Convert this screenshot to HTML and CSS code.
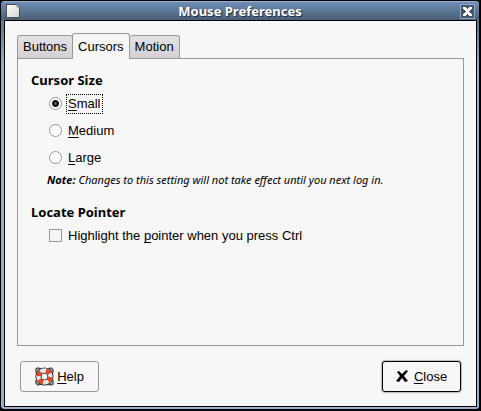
FILE: index.html
```
<!DOCTYPE html>
<html lang="en">
<head>
  <meta charset="utf-8">
  <title>Mouse Preferences</title>
  <link rel="stylesheet" href="styles.css">
</head>

<body>
  <div class="window">
    <header class="titlebar">
      <svg class="doc-icon" width="14" height="14" viewBox="0 0 14 14">
        <defs>
          <linearGradient id="paper" x1="0" y1="0" x2="1" y2="1">
            <stop offset="0" stop-color="#ffffff"/>
            <stop offset="1" stop-color="#d2d2d2"/>
          </linearGradient>
        </defs>
        <path d="M.5.5H10.500L13.500 3.500V13.500H.5Z" fill="url(#paper)" stroke="#4c4c4c"/>
        <path d="M10.500 1V3.500H13" fill="#fff" stroke="#bbb"/>
      </svg>
      <h1>Mouse Preferences</h1>
      <button class="window-close" type="button" aria-label="Close window">
        <svg width="9" height="9" viewBox="0 0 9 9" shape-rendering="crispEdges">
          <path d="M0 0H3V1H4V2H5V1H6V0H9V2H8V3H7V4H6V5H7V6H8V7H9V9H6V8H5V7H4V8H3V9H0V7H1V6H2V5H3V4H2V3H1V2H0Z" fill="#fff"/>
        </svg>
      </button>
    </header>

    <form class="content">
      <div class="tabs" role="tablist">
        <button class="tab" type="button" role="tab">Buttons</button>
        <button class="tab active" type="button" role="tab" aria-selected="true">Cursors</button>
        <button class="tab" type="button" role="tab">Motion</button>
      </div>

      <div class="panel" role="tabpanel">
        <h2>Cursor Size</h2>
        <div class="option">
          <input type="radio" id="small" name="size" checked>
          <label class="focused" for="small"><u>S</u>mall</label>
        </div>
        <div class="option">
          <input type="radio" id="medium" name="size">
          <label for="medium"><u>M</u>edium</label>
        </div>
        <div class="option">
          <input type="radio" id="large" name="size">
          <label for="large"><u>L</u>arge</label>
        </div>
        <p class="note"><b>Note:</b> Changes to this setting will not take effect until you next log in.</p>

        <h2>Locate Pointer</h2>
        <div class="option">
          <input type="checkbox" id="highlight">
          <label for="highlight">Highlight the <u>p</u>ointer when you press Ctrl</label>
        </div>
      </div>

      <footer class="actions">
        <button class="button" type="button">
          <svg width="19" height="19" viewBox="0 0 20 20">
            <path d="M1 6V2L3 1 7 2M13 2L17 1 19 3V6M19 14V18L17 19 13 18M7 18L3 19 1 17V14" fill="#bbb" stroke="#555" stroke-width="1.500"/>
            <circle cx="10" cy="10" r="6.300" fill="#f8f6f6" stroke="#222" stroke-width="6.400"/>
            <circle cx="10" cy="10" r="6.300" fill="none" stroke="#e8e8e8" stroke-width="4.600"/>
            <g fill="none" stroke="#e8481c" stroke-width="4.600">
              <path d="M3.700 9.500A6.300 6.300 0 0 1 6 5.100"/>
              <path d="M11.500 3.900A6.300 6.300 0 0 1 15.500 6.900"/>
              <path d="M16.300 10.500A6.300 6.300 0 0 1 14 14.900"/>
              <path d="M8.500 16.100A6.300 6.300 0 0 1 4.500 13.100"/>
            </g>
          </svg>
          <span><u>H</u>elp</span>
        </button>
        <button class="button default" type="button">
          <svg class="cross" width="13" height="13" viewBox="0 0 13 13">
            <path d="M1 2L3 1 6 4 10 0 12 1 8 6 12 11 9 12 6 8 3 12 0 11 4 6Z" fill="#000"/>
          </svg>
          <span><u>C</u>lose</span>
        </button>
      </footer>
    </form>
  </div>
</body>
</html>
```
FILE: styles.css
```
* {
  box-sizing: border-box;
}

body {
  margin: 0;
  background: #000;
  color: #000;
  font: 13px/18px "Liberation Sans", sans-serif;
}

button {
  font: inherit;
  color: inherit;
}

u {
  text-underline-offset: 2px;
  text-decoration-thickness: 1px;
  text-decoration-skip-ink: none;
}

.window {
  display: flex;
  flex-direction: column;
  min-height: 100vh;
  padding: 0 2px 2px 3px;
  background: linear-gradient(#6c8cb4, #5c7894 24px, #98b0c8 64px, #98b0c8);
  border: 1px solid #000;
  border-width: 1px 2px 2px 1px;
  border-radius: 5px;
}

.titlebar {
  display: flex;
  align-items: center;
  height: 19px;
  margin: 0 -2px 0 -3px;
  padding: 0 4px 0 5px;
  background: linear-gradient(#6f8db6, #485e74);
  border-top: 1px solid #9cb4d4;
  border-radius: 4px 4px 0 0;
}

.titlebar h1 {
  flex: 1;
  margin: 0;
  color: #fff;
  font: bold 13px/16px "Noto Sans", sans-serif;
  text-align: center;
  text-shadow: 1px 1px 1px #1c2a38;
}

.window-close {
  display: flex;
  align-items: center;
  justify-content: center;
  width: 15px;
  height: 15px;
  padding: 0;
  background: #43586c;
  border: 1px solid #90a8c8;
}

.content {
  flex: 1;
  display: flex;
  flex-direction: column;
  padding: 12px 12px 14px;
  background: #f7f7f7;
  border: 1px solid #000;
}

.tabs {
  display: flex;
  align-items: flex-end;
}

.tab {
  height: 23px;
  padding: 0 5px;
  background: linear-gradient(#e4e2e4, #d3d1d3);
  border: 1px solid #989898;
  border-bottom: 0;
  border-radius: 3px 3px 0 0;
}

.tab + .tab {
  border-left: 0;
}

.tab.active {
  z-index: 1;
  height: 26px;
  margin: 0 0 -1px -1px;
  padding: 0 5px;
  background: #f7f7f7;
  border-left: 1px solid #989898;
}

.panel {
  flex: 1;
  padding: 12px 13px;
  border: 1px solid #989898;
}

.panel h2 {
  margin: 0 0 5px;
  font: bold 13px/18px "Noto Sans", sans-serif;
}

.option {
  display: flex;
  align-items: center;
  gap: 4px;
  height: 19px;
  margin: 0 0 8px 18px;
}

.option input {
  appearance: none;
  width: 13px;
  height: 13px;
  margin: 0;
  background: #fff;
  border: 1px solid #989898;
}

.option input[type="radio"] {
  border-radius: 50%;
}

.option input[type="checkbox"] {
  background: #f7f7f7;
}

.option input[type="radio"]:checked {
  background: radial-gradient(circle, #777 0, #111 2px, #111 3px, #fff 4px);
}

.option label {
  padding: 0 1px;
  border: 1px solid transparent;
}

.option .focused {
  border: 1px dotted #000;
}

.note {
  margin: -4px 0 14px 16px;
  font: italic 11px/18px "Noto Sans", sans-serif;
}

.actions {
  display: flex;
  justify-content: space-between;
  padding: 15px 3px 0;
}

.button {
  display: flex;
  align-items: center;
  justify-content: center;
  gap: 3px;
  width: 79px;
  height: 31px;
  padding: 0;
  background: #f8f6f6;
  border: 1px solid #989898;
  border-radius: 3px;
}

.button.default {
  gap: 5px;
  border-color: #000;
  box-shadow: 0 0 1px 1px #bbb;
}
```
